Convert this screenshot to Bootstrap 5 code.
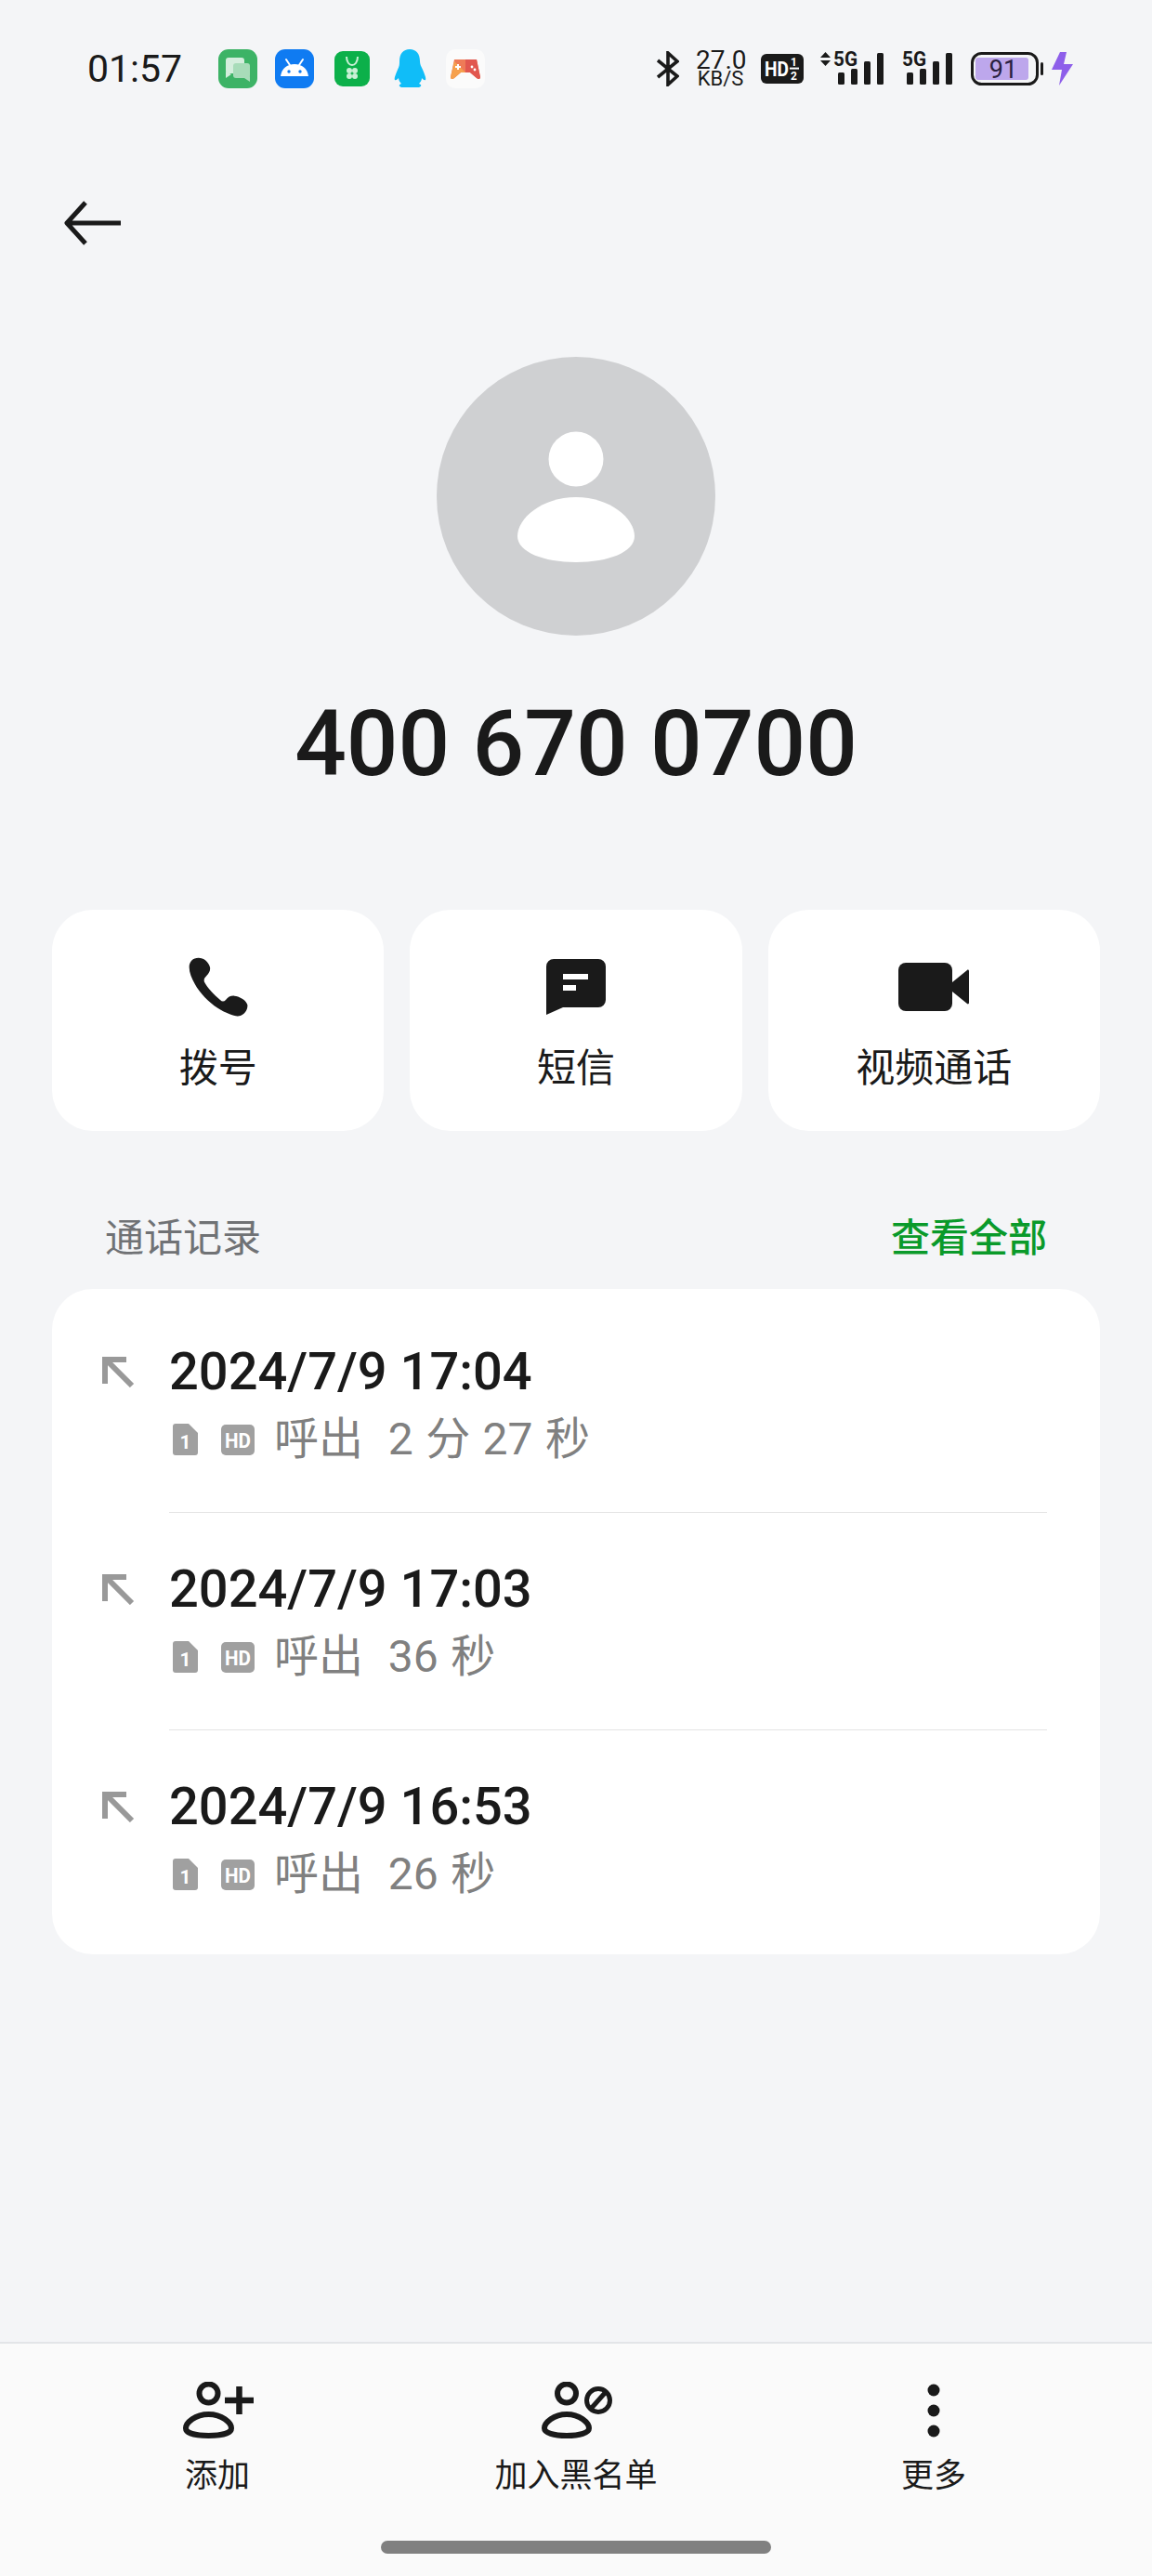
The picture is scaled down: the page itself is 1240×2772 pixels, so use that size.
<!DOCTYPE html>
<html lang="zh-CN">
<head>
<meta charset="utf-8">
<title>400 670 0700</title>
<link href="https://cdn.jsdelivr.net/npm/bootstrap@5.3.0/dist/css/bootstrap.min.css" rel="stylesheet">
<style>
html,body{margin:0;padding:0}
body{background:#f4f5f7;color:#1a1a1a;font-family:Roboto,"Noto Sans CJK SC",sans-serif;width:1240px;height:2772px;overflow:hidden}
svg{display:block;flex:none}
.app-page{height:2772px}
.status-row{height:148px;padding-left:94px;padding-right:85px}
.clock{font-size:41px;line-height:1;width:141px;color:#1a1a1a}
.st-app{margin-right:19px}
.st-store{margin-left:3px}
.st-qq{margin-left:6px;margin-right:21px}
.st-right{gap:0}
.st-bt{margin-right:18px}
.net-speed{width:53px;margin-right:17px;text-align:center;line-height:1}
.net-speed b{display:block;font-size:28px;font-weight:400;line-height:22px}
.net-speed i{display:block;font-style:normal;font-size:22px;line-height:18px}
.st-hd{margin-right:18px}
.st-sig{margin-right:20px}
.st-batt{margin-right:9px}
.back-row{height:184px;padding-left:67px}
.avatar-wrap{margin-top:52px}
.contact-name{font-size:98px;font-weight:500;line-height:120px;margin-top:57px;margin-bottom:0;color:#1a1a1a}
.action-row{margin:118px 56px 0;gap:28px}
.action-tile{flex:1 1 0;height:238px;border:0;border-radius:44px;background:#fff;color:#1a1a1a;font-size:42px;line-height:56px}
.action-ico{height:66px;margin-top:50px;margin-bottom:27px}
.log-head{margin:86px 56px 0;padding:0 57px;height:60px;line-height:60px;font-size:42px}
.log-title{color:#707275}
.log-all{color:#0a9a2a;font-weight:500}
.log-panel{margin:24px 56px 0;padding:54px 57px 54px 54px;border:0;border-radius:44px;background:#fff}
.log-arrow{width:72px;padding-top:18px}
.log-date{font-size:56px;font-weight:500;line-height:68px;color:#1a1a1a;padding-top:1px;margin-bottom:-1px}
.log-sub{font-size:48px;line-height:66px;margin-top:7px;color:#808080;word-spacing:1.5px}
.sub-sim{margin-left:4px;margin-right:25px}
.sub-hd{margin-right:21px}
.log-body{padding-bottom:45px;border-bottom:1px solid #e4e4e4;margin-bottom:47px}
.log-item:last-child .log-body{padding-bottom:0;border-bottom:0;margin-bottom:-1px}
.tool-bar{height:252px;background:#fafafa;border-top:2px solid #e3e5e8}
.tool-cols{padding:41px 0 0}
.tool-col{font-size:35px;line-height:44px;color:#1a1a1a}
.tool-a{width:468px}.tool-b{width:304px}.tool-c{width:466px}
.tool-ico{height:64px;margin-bottom:16px}
.dots-ico{margin-top:2px}
.home-pill{width:420px;height:14px;border-radius:7px;background:#808080;margin:47px auto 0}
</style>
</head>
<body>
<div class="app-page d-flex flex-column">

  <div class="status-row d-flex align-items-center">
    <div class="clock">01:57</div>
    <svg class="st-app" width="42" height="42" viewBox="0 0 42 42"><rect width="42" height="42" rx="11" fill="#3db366"/><rect x="8" y="9" width="20" height="17" rx="3" fill="#d5eedd"/><path d="M8 24l0 7 6-4z" fill="#d5eedd"/><rect x="16" y="15" width="18" height="16" rx="3" fill="#a8dcb9"/><path d="M34 29v6l-6-4z" fill="#a8dcb9"/></svg>
    <svg class="st-app" width="42" height="42" viewBox="0 0 42 42"><rect width="42" height="42" rx="11" fill="#0f7bf2"/><path d="M6 29c1-8 7-13 15-13s14 5 15 13z" fill="#fff"/><path d="M12 11l4 6M30 11l-4 6" stroke="#fff" stroke-width="2" stroke-linecap="round"/><circle cx="15" cy="24" r="1.7" fill="#0f7bf2"/><circle cx="27" cy="24" r="1.7" fill="#0f7bf2"/></svg>
    <svg class="st-app st-store" width="38" height="38" viewBox="0 0 38 38"><rect width="38" height="38" rx="9" fill="#0cb04a"/><path d="M13 6c0 6 3 9 6 9s6-3 6-9" fill="none" stroke="#c9f0d6" stroke-width="2"/><circle cx="16" cy="21" r="3" fill="#c9f0d6"/><circle cx="22" cy="21" r="3" fill="#c9f0d6"/><circle cx="16" cy="27" r="3" fill="#c9f0d6"/><circle cx="22" cy="27" r="3" fill="#c9f0d6"/></svg>
    <svg class="st-qq" width="36" height="42" viewBox="0 0 36 42"><path d="M18 0c7 0 11 5 11 13 0 3 1 5 3 9 2 5 4 9 3 11-1 1-3-1-4-2 0 3-2 5-3 6 3 1 3 3 0 4H9c-3-1-3-3 0-4-1-1-3-3-3-6-1 1-3 3-4 2-1-2 1-6 3-11 2-4 2-6 2-9C7 5 11 0 18 0z" fill="#10bdf8"/></svg>
    <svg width="42" height="42" viewBox="0 0 42 42"><rect width="42" height="42" rx="10" fill="#fbfbfb"/><path d="M9 11h24l4 19c0 2-2 3-4 1l-7-6H16l-7 6c-2 2-4 1-4-1z" fill="#ee7b57"/><path d="M5 30l4-17 12 12-5 0-7 6c-2 2-4 1-4-1z" fill="#f6a14e"/><path d="M21 11h12l4 19c0 2-2 3-4 1l-7-6h-5z" fill="#e1574f"/><path d="M13 16v6M10 19h6" stroke="#fff" stroke-width="2"/><circle cx="28" cy="19" r="1.4" fill="#fff"/><circle cx="31" cy="22" r="1.4" fill="#fff"/></svg>

    <div class="st-right ms-auto d-flex align-items-center">
      <svg class="st-bt" width="24" height="38" viewBox="0 0 24 38" fill="none" stroke="#1a1a1a" stroke-width="3.6"><path d="M1 10l21 17-10 9V2l10 9L1 28"/></svg>
      <div class="net-speed"><b>27.0</b><i>KB/S</i></div>
      <svg class="st-hd" width="46" height="32" viewBox="0 0 46 32"><rect width="46" height="32" rx="6" fill="#1a1a1a"/><text x="4" y="24" font-family="Roboto,sans-serif" font-size="22" font-weight="700" fill="#fff" textLength="26" lengthAdjust="spacingAndGlyphs">HD</text><text x="32" y="13" font-family="Roboto,sans-serif" font-size="12" font-weight="700" fill="#fff">1</text><text x="32" y="28" font-family="Roboto,sans-serif" font-size="12" font-weight="700" fill="#fff">2</text><rect x="31" y="14.6" width="10" height="2" fill="#fff"/></svg>
      <svg class="st-sig" width="68" height="50" viewBox="0 -6 68 50"><path d="M5.5 1l5.5 6H0zM5.5 16L0 10h11z" fill="#1a1a1a"/><text x="14" y="16" font-family="Roboto,sans-serif" font-size="22" font-weight="700" fill="#1a1a1a" textLength="26" lengthAdjust="spacingAndGlyphs">5G</text><rect x="19" y="23" width="7" height="13" rx="1.5" fill="#1a1a1a"/><rect x="33" y="19" width="7" height="17" rx="1.5" fill="#1a1a1a"/><rect x="47" y="11" width="7" height="25" rx="1.5" fill="#1a1a1a"/><rect x="61" y="2" width="7" height="34" rx="1.5" fill="#1a1a1a"/></svg>
      <svg class="st-sig" width="54" height="50" viewBox="0 -6 54 50"><text x="0" y="16" font-family="Roboto,sans-serif" font-size="22" font-weight="700" fill="#1a1a1a" textLength="26" lengthAdjust="spacingAndGlyphs">5G</text><rect x="5" y="23" width="7" height="13" rx="1.5" fill="#1a1a1a"/><rect x="19" y="19" width="7" height="17" rx="1.5" fill="#1a1a1a"/><rect x="33" y="11" width="7" height="25" rx="1.5" fill="#1a1a1a"/><rect x="47" y="2" width="7" height="34" rx="1.5" fill="#1a1a1a"/></svg>
      <svg class="st-batt" width="78" height="36" viewBox="0 0 78 36"><rect x="1.5" y="1.5" width="70" height="33" rx="10" fill="none" stroke="#1a1a1a" stroke-width="3"/><rect x="5" y="6" width="57" height="24" rx="3" fill="#bda7ec"/><rect x="75" y="11" width="3" height="14" rx="1.5" fill="#1a1a1a"/><text x="35" y="27.5" text-anchor="middle" font-family="Roboto,sans-serif" font-size="27" fill="#2a2040">91</text></svg>
      <svg width="23" height="36" viewBox="0 0 23 36"><path d="M9 0h7l-3 13h10L8 36l3-17H0z" fill="#8e5fea"/></svg>
    </div>
  </div>

  <div class="back-row d-flex align-items-center">
    <svg width="64" height="48" viewBox="0 0 64 48" fill="none" stroke="#1a1a1a" stroke-width="5"><path d="M63 24H5M25 2L5 24l20 22" stroke-linejoin="round"/></svg>
  </div>

  <div class="avatar-wrap d-flex justify-content-center">
    <svg width="300" height="300" viewBox="0 0 300 300"><circle cx="150" cy="150" r="150" fill="#cfd0d2"/><circle cx="150" cy="110" r="29.5" fill="#fff"/><path d="M150 151C113 151 87 174 87 193C87 210 115 221 150 221C185 221 213 210 213 193C213 174 187 151 150 151Z" fill="#fff"/></svg>
  </div>

  <h1 class="contact-name text-center">400 670 0700</h1>

  <div class="action-row d-flex">
    <div class="card action-tile align-items-center">
      <div class="action-ico d-flex align-items-center">
        <svg width="68" height="68" viewBox="30 22 204 204"><path d="M38 60C38 42 50 30 68 30C85 30 100 42 105 60C107 72 102 80 94 88C88 94 84 100 87 108C96 126 118 148 138 166C144 172 150 172 156 166C164 156 172 152 184 153C204 156 222 168 226 182C228 198 216 214 200 218C184 220 160 210 130 192C100 172 72 144 56 114C46 96 38 78 38 60Z" fill="#1a1a1a"/></svg>
      </div>
      <div>拨号</div>
    </div>
    <div class="card action-tile align-items-center">
      <div class="action-ico d-flex align-items-center">
        <svg width="64" height="60" viewBox="0 0 64 60"><path d="M8 0h48a8 8 0 0 1 8 8v36a8 8 0 0 1-8 8H18L0 60V8a8 8 0 0 1 8-8z" fill="#1a1a1a"/><rect x="18" y="16" width="27" height="6" fill="#fff"/><rect x="18" y="28" width="14" height="6" fill="#fff"/></svg>
      </div>
      <div>短信</div>
    </div>
    <div class="card action-tile align-items-center">
      <div class="action-ico d-flex align-items-center">
        <svg width="76" height="52" viewBox="0 0 76 52"><rect width="58" height="52" rx="8" fill="#1a1a1a"/><path d="M58 21L74 8c1-1 2 0 2 1v34c0 1-1 2-2 1L58 31z" fill="#1a1a1a"/></svg>
      </div>
      <div>视频通话</div>
    </div>
  </div>

  <div class="log-head d-flex justify-content-between">
    <span class="log-title">通话记录</span>
    <span class="log-all">查看全部</span>
  </div>

  <div class="card log-panel">
    <div class="log-item d-flex">
      <div class="log-arrow"><svg width="36" height="34" viewBox="0 0 36 34" fill="none" stroke="#999" stroke-width="6"><path d="M32 32L5 5M0 4h26M3 2v28"/></svg></div>
      <div class="log-body flex-grow-1">
        <div class="log-date">2024/7/9 17:04</div>
        <div class="log-sub d-flex align-items-center">
          <svg class="sub-sim" width="27" height="34" viewBox="0 0 27 34"><path d="M3 0h14l10 10v21a3 3 0 0 1-3 3H3a3 3 0 0 1-3-3V3a3 3 0 0 1 3-3z" fill="#a0a0a0"/><text x="13.5" y="27" text-anchor="middle" font-family="Roboto,sans-serif" font-size="21" font-weight="700" fill="#fff">1</text></svg>
          <svg class="sub-hd" width="36" height="33" viewBox="0 0 36 33"><rect width="36" height="33" rx="5" fill="#a0a0a0"/><text x="18" y="24.5" text-anchor="middle" font-family="Roboto,sans-serif" font-size="22" font-weight="700" fill="#fff" textLength="28" lengthAdjust="spacingAndGlyphs">HD</text></svg>
          <span>呼出&nbsp; 2 分 27 秒</span>
        </div>
      </div>
    </div>
    <div class="log-item d-flex">
      <div class="log-arrow"><svg width="36" height="34" viewBox="0 0 36 34" fill="none" stroke="#999" stroke-width="6"><path d="M32 32L5 5M0 4h26M3 2v28"/></svg></div>
      <div class="log-body flex-grow-1">
        <div class="log-date">2024/7/9 17:03</div>
        <div class="log-sub d-flex align-items-center">
          <svg class="sub-sim" width="27" height="34" viewBox="0 0 27 34"><path d="M3 0h14l10 10v21a3 3 0 0 1-3 3H3a3 3 0 0 1-3-3V3a3 3 0 0 1 3-3z" fill="#a0a0a0"/><text x="13.5" y="27" text-anchor="middle" font-family="Roboto,sans-serif" font-size="21" font-weight="700" fill="#fff">1</text></svg>
          <svg class="sub-hd" width="36" height="33" viewBox="0 0 36 33"><rect width="36" height="33" rx="5" fill="#a0a0a0"/><text x="18" y="24.5" text-anchor="middle" font-family="Roboto,sans-serif" font-size="22" font-weight="700" fill="#fff" textLength="28" lengthAdjust="spacingAndGlyphs">HD</text></svg>
          <span>呼出&nbsp; 36 秒</span>
        </div>
      </div>
    </div>
    <div class="log-item d-flex">
      <div class="log-arrow"><svg width="36" height="34" viewBox="0 0 36 34" fill="none" stroke="#999" stroke-width="6"><path d="M32 32L5 5M0 4h26M3 2v28"/></svg></div>
      <div class="log-body flex-grow-1">
        <div class="log-date">2024/7/9 16:53</div>
        <div class="log-sub d-flex align-items-center">
          <svg class="sub-sim" width="27" height="34" viewBox="0 0 27 34"><path d="M3 0h14l10 10v21a3 3 0 0 1-3 3H3a3 3 0 0 1-3-3V3a3 3 0 0 1 3-3z" fill="#a0a0a0"/><text x="13.5" y="27" text-anchor="middle" font-family="Roboto,sans-serif" font-size="21" font-weight="700" fill="#fff">1</text></svg>
          <svg class="sub-hd" width="36" height="33" viewBox="0 0 36 33"><rect width="36" height="33" rx="5" fill="#a0a0a0"/><text x="18" y="24.5" text-anchor="middle" font-family="Roboto,sans-serif" font-size="22" font-weight="700" fill="#fff" textLength="28" lengthAdjust="spacingAndGlyphs">HD</text></svg>
          <span>呼出&nbsp; 26 秒</span>
        </div>
      </div>
    </div>
  </div>

  <div class="tool-bar mt-auto">
    <div class="tool-cols d-flex">
      <div class="tool-col tool-a d-flex flex-column align-items-center">
        <div class="tool-ico"><svg width="78" height="62" viewBox="0 0 78 62" fill="none" stroke="#1a1a1a" stroke-width="6"><circle cx="29.5" cy="12.5" r="10"/><path d="M29.5 35C15 35 5 44 5 50C5 55 15 58 29.5 58C44 58 54 55 54 50C54 44 44 35 29.5 35Z"/><path d="M47 20h31M62.5 5v30" stroke-width="6.5"/></svg></div>
        <div>添加</div>
      </div>
      <div class="tool-col tool-b d-flex flex-column align-items-center">
        <div class="tool-ico"><svg width="78" height="62" viewBox="0 0 78 62" fill="none" stroke="#1a1a1a" stroke-width="6"><circle cx="29" cy="12.5" r="10"/><path d="M29 35C15 35 5 44 5 50C5 55 15 58 29 58C43 58 53 55 53 50C53 44 43 35 29 35Z"/><circle cx="63" cy="20" r="12.5" stroke-width="5"/><path d="M55 29l16-18" stroke-width="5"/></svg></div>
        <div>加入黑名单</div>
      </div>
      <div class="tool-col tool-c d-flex flex-column align-items-center">
        <div class="tool-ico"><svg class="dots-ico" width="14" height="58" viewBox="0 0 14 58"><circle cx="7" cy="7" r="6.5" fill="#1a1a1a"/><circle cx="7" cy="29" r="6.5" fill="#1a1a1a"/><circle cx="7" cy="51" r="6.5" fill="#1a1a1a"/></svg></div>
        <div>更多</div>
      </div>
    </div>
    <div class="home-pill"></div>
  </div>
</div>
<script src="https://cdn.jsdelivr.net/npm/bootstrap@5.3.0/dist/js/bootstrap.bundle.min.js"></script>
</body>
</html>
